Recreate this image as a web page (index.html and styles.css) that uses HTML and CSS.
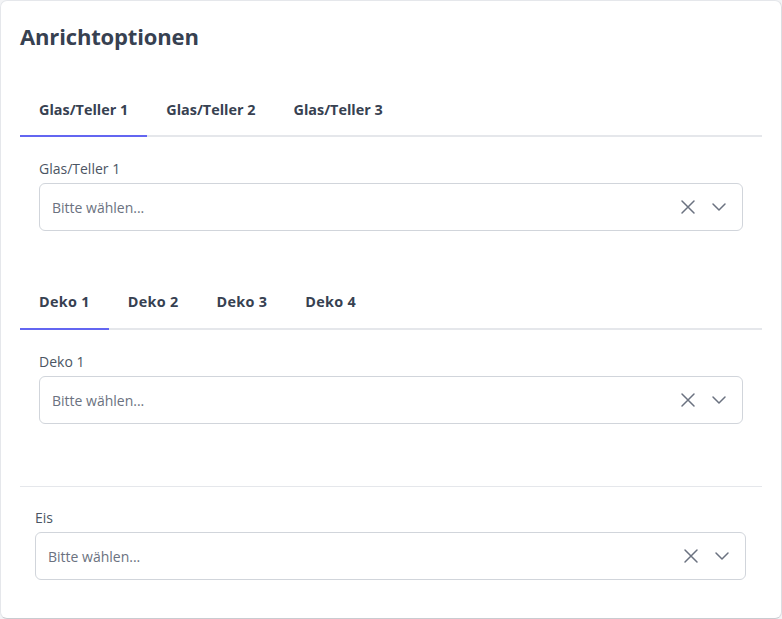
FILE: index.html
```html
<!DOCTYPE html>
<html lang="de">
<head>
<meta charset="utf-8">
<title>Anrichtoptionen</title>
<link rel="stylesheet" href="styles.css">
</head>
<body>
<div class="card">
  <h2 class="title">Anrichtoptionen</h2>

  <div class="tabs">
    <div class="tab active">Glas/Teller 1</div>
    <div class="tab">Glas/Teller 2</div>
    <div class="tab">Glas/Teller 3</div>
  </div>
  <div class="panel">
    <div class="label">Glas/Teller 1</div>
    <div class="select">
      <span class="placeholder">Bitte wählen...</span>
      <span class="icons">
        <svg class="ico" viewBox="0 0 16 16" width="16" height="16"><path d="M2 2L14 14M14 2L2 14" stroke="currentColor" stroke-width="1.5" fill="none" stroke-linecap="round"/></svg>
        <svg class="ico" viewBox="0 0 16 16" width="16" height="16"><path d="M2 5L8 11L14 5" stroke="currentColor" stroke-width="1.5" fill="none" stroke-linecap="round" stroke-linejoin="round"/></svg>
      </span>
    </div>
  </div>

  <div class="tabs second">
    <div class="tab active">Deko 1</div>
    <div class="tab">Deko 2</div>
    <div class="tab">Deko 3</div>
    <div class="tab">Deko 4</div>
  </div>
  <div class="panel">
    <div class="label">Deko 1</div>
    <div class="select">
      <span class="placeholder">Bitte wählen...</span>
      <span class="icons">
        <svg class="ico" viewBox="0 0 16 16" width="16" height="16"><path d="M2 2L14 14M14 2L2 14" stroke="currentColor" stroke-width="1.5" fill="none" stroke-linecap="round"/></svg>
        <svg class="ico" viewBox="0 0 16 16" width="16" height="16"><path d="M2 5L8 11L14 5" stroke="currentColor" stroke-width="1.5" fill="none" stroke-linecap="round" stroke-linejoin="round"/></svg>
      </span>
    </div>
  </div>

  <hr class="divider">

  <div class="eis">
    <div class="label">Eis</div>
    <div class="select">
      <span class="placeholder">Bitte wählen...</span>
      <span class="icons">
        <svg class="ico" viewBox="0 0 16 16" width="16" height="16"><path d="M2 2L14 14M14 2L2 14" stroke="currentColor" stroke-width="1.5" fill="none" stroke-linecap="round"/></svg>
        <svg class="ico" viewBox="0 0 16 16" width="16" height="16"><path d="M2 5L8 11L14 5" stroke="currentColor" stroke-width="1.5" fill="none" stroke-linecap="round" stroke-linejoin="round"/></svg>
      </span>
    </div>
  </div>
</div>
</body>
</html>
```

FILE: styles.css
```css
* { box-sizing: border-box; }
html, body {
  margin: 0;
  padding: 0;
  background: #f3f4f6;
}
body {
  font-family: "Open Sans", "Noto Sans", "Liberation Sans", sans-serif;
  color: #374151;
}
.card {
  width: 782px;
  height: 619px;
  background: #ffffff;
  border: 1px solid #e5e7eb;
  border-bottom-color: #c9cbd0;
  border-right-color: #dcdde1;
  border-radius: 7px;
  padding: 21px 19px 0 19px;
}
.title {
  margin: 0;
  font-size: 22px;
  line-height: 28px;
  font-weight: 700;
  color: #374151;
  letter-spacing: -0.15px;
}
.tabs {
  display: flex;
  margin-top: 37px;
  border-bottom: 2px solid #e5e7eb;
}
.tabs.second {
  margin-top: 25px;
}
.tab {
  padding: 13px 19px 15px 19px;
  margin-bottom: -2px;
  border-bottom: 2px solid transparent;
  font-size: 14.4px;
  line-height: 20px;
  font-weight: 700;
  color: #374151;
}
.tabs.second .tab {
  padding-top: 12px;
  padding-bottom: 16px;
  letter-spacing: 0.3px;
}
.tab.active {
  border-bottom-color: #6366f1;
}
.panel {
  padding: 22px 19px 24px 19px;
}
.label {
  font-size: 14px;
  line-height: 20px;
  color: #4b5563;
  margin-bottom: 4px;
}
.select {
  height: 48px;
  border: 1px solid #d1d5db;
  border-radius: 6px;
  display: flex;
  align-items: center;
  justify-content: space-between;
  padding: 0 15px 0 12px;
}
.placeholder {
  font-size: 14px;
  color: #6b7280;
}
.icons {
  display: flex;
  align-items: center;
  gap: 15px;
  color: #6b7280;
}
.ico {
  display: block;
}
.divider {
  margin: 38px 0 0 0;
  border: 0;
  border-top: 1px solid #e5e7eb;
}
.eis {
  padding: 21px 16px 0 15px;
}
```
